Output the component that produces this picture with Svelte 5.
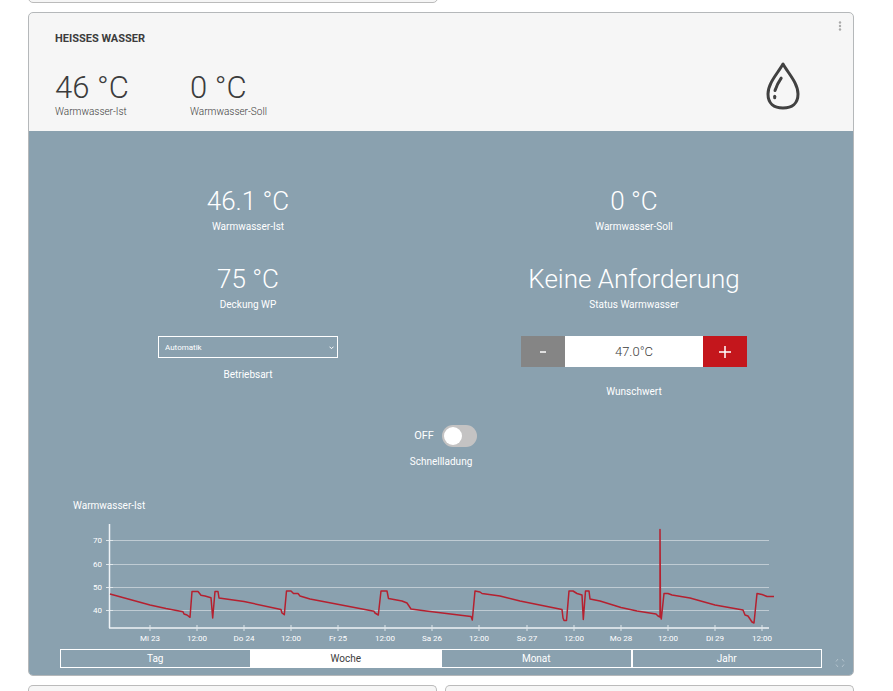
<script lang="ts">
	const ranges: string[] = ['Tag', 'Woche', 'Monat', 'Jahr'];
	const modes: string[] = ['Automatik', 'Aus', 'Handbetrieb'];

	let range: string = $state('Woche');
	let mode: string = $state('Automatik');
	let target: number = $state(47);
	let quickCharge: boolean = $state(false);

	const targetText = $derived(`${target.toFixed(1)}°C`);

	const yTicks = [
		{ label: '70', y: 24 },
		{ label: '60', y: 48 },
		{ label: '50', y: 71 },
		{ label: '40', y: 94 }
	];

	const days: string[] = ['Mi 23', 'Do 24', 'Fr 25', 'Sa 26', 'So 27', 'Mo 28', 'Di 29'];
	const xTicks = days.flatMap((day, i) => [
		{ label: day, x: Math.round(90 + i * 94.15) },
		{ label: '12:00', x: Math.round(137 + i * 94.15) }
	]);

	// one week of tank temperature, in chart units
	const series = [
		'50,78 70,83.5 90,89 106,92.5 123,95.7 124,98 127,99 130,101.3 132,75.5 138,75.5 141,79.3 145,80 151,81.7',
		'152.7,102 155,75.5 158,75.5 159,82 184,85.5 221,93.5 222,97 224.3,98.7 226.5,75 231,75 233.5,77.5 238,77.5',
		'240,80 250,83 271,87 314,95.3 315,97 318.3,99 321,75 327,75 328.5,82.5 342,85 347,87 351,93 366,95 411,100.5',
		'412.3,104 415,75 420,76 422,77.5 440,80 460,85 502,93.5 503,102 504,104.5 506.5,104.5 509,75 513,75 517,77.5',
		'522,79 523.3,103.5 525.5,75 529,75 530,83 540,85 561,91.5 577,95 596,98 598,100 600,101 600,13.5 600.5,100',
		'601.3,103 604,77.5 608,77.5 612,79 630,82 655,89 683,94 685,99 688,100 692,106 694,107 697,77.5 702,78.5',
		'707,80.5 714,80.5'
	].join(' ');
</script>

<svelte:head>
	<title>Heisses Wasser</title>
</svelte:head>

<main class="page">
	<div class="neighbours above">
		<div class="stub"></div>
		<div class="blank"></div>
	</div>

	<section class="card">
		<header class="head">
			<button class="menu" aria-label="Menü">
				<svg width="4" height="10" viewBox="0 0 4 10">
					<circle cx="2" cy="1.5" r="1.2" />
					<circle cx="2" cy="5" r="1.2" />
					<circle cx="2" cy="8.5" r="1.2" />
				</svg>
			</button>
			<div class="summary">
				<h1>HEISSES WASSER</h1>
				<div class="readings">
					<div class="reading">
						<div class="big">46 °C</div>
						<div class="caption">Warmwasser-Ist</div>
					</div>
					<div class="reading">
						<div class="big">0 °C</div>
						<div class="caption">Warmwasser-Soll</div>
					</div>
				</div>
			</div>
			<svg class="drop" width="34" height="50" viewBox="0 0 34 50" fill="none">
				<path d="M17 3C12 12 2 22 2 33c0 9.500 6 14 15 14s15-4.500 15-14C32 22 22 12 17 3Z" />
				<path d="M15.200 17.200C12.500 21 10.500 25 9 29.500" />
				<path d="M8.700 35.300v1.400" />
			</svg>
		</header>

		<div class="body">
			<div class="cells">
				<div class="cell">
					<div class="value">46.1 °C</div>
					<div class="label">Warmwasser-Ist</div>
				</div>
				<div class="cell">
					<div class="value">0 °C</div>
					<div class="label">Warmwasser-Soll</div>
				</div>
				<div class="cell">
					<div class="value">75 °C</div>
					<div class="label">Deckung WP</div>
				</div>
				<div class="cell">
					<div class="value">Keine Anforderung</div>
					<div class="label">Status Warmwasser</div>
				</div>
			</div>

			<div class="controls">
				<div class="control">
					<div class="select">
						<select id="mode" bind:value={mode}>
							{#each modes as m}
								<option>{m}</option>
							{/each}
						</select>
						<svg class="arrow" width="5" height="4" viewBox="0 0 5 4">
							<path d="M.5.700 2.500 2.700 4.500.7" />
						</svg>
					</div>
					<label class="label" for="mode">Betriebsart</label>
				</div>
				<div class="control wide">
					<div class="stepper">
						<button class="minus" aria-label="Verringern" onclick={() => target -= 0.5}>
							<svg width="12" height="12" viewBox="0 0 12 12"><path d="M3 6h6" /></svg>
						</button>
						<input id="target" value={targetText} readonly />
						<button class="plus" aria-label="Erhöhen" onclick={() => target += 0.5}>
							<svg width="12" height="12" viewBox="0 0 12 12"><path d="M0 6h12M6 0v12" /></svg>
						</button>
					</div>
					<label class="label" for="target">Wunschwert</label>
				</div>
			</div>

			<div class="quick">
				<div class="switch-row">
					<span class="state">{quickCharge ? 'ON' : 'OFF'}</span>
					<input id="quick" class="switch" type="checkbox" bind:checked={quickCharge} />
				</div>
				<label class="label" for="quick">Schnellladung</label>
			</div>

			<div class="history">
				<div class="label chart-title">Warmwasser-Ist</div>
				<svg class="chart" viewBox="0 0 762 130" role="img" aria-label="Warmwasser-Ist">
					{#each yTicks as t}
						<line class="grid" x1="50" x2="709" y1={t.y + 0.5} y2={t.y + 0.5} />
						<line class="tick" x1="46" x2="53" y1={t.y + 0.5} y2={t.y + 0.5} />
						<text class="y-label" x="42" y={t.y + 3}>{t.label}</text>
					{/each}
					<line class="axis" x1="49.5" x2="49.5" y1="8" y2="112" />
					<line class="axis" x1="49" x2="709" y1="112" y2="112" />
					{#each xTicks as t}
						<line class="tick" x1={t.x} x2={t.x} y1="109" y2="115" />
						<text class="x-label" x={t.x} y="125">{t.label}</text>
					{/each}
					<polyline class="series" points={series} />
				</svg>
				<div class="ranges">
					{#each ranges as r}
						<button class="range" class:active={range === r} onclick={() => range = r}>{r}</button>
					{/each}
				</div>
			</div>

			<button class="expand" aria-label="Vollbild">
				<svg width="10" height="10" viewBox="0 0 10 10">
					<path d="M3 1 1 3.500M7 1l2 2.500M3 9 1 6.500M7 9l2-2.500" />
				</svg>
			</button>
		</div>
	</section>

	<div class="neighbours below">
		<div class="stub"></div>
		<div class="stub"></div>
	</div>
</main>

<style>
	:global(body) {
		margin: 0;
		background: #fff;
	}

	.page {
		display: flex;
		flex-direction: column;
		gap: 9px;
		padding: 0 39px 0 28px;
		font-family: Roboto, 'Liberation Sans', sans-serif;
		color: #3c3c3c;
	}

	button, input, select {
		font-family: inherit;
		margin: 0;
		border-radius: 0;
	}

	button {
		padding: 0;
		border: none;
		cursor: pointer;
	}

	.neighbours {
		display: flex;
		gap: 8px;
	}

	.stub, .blank {
		flex: 1;
		box-sizing: border-box;
	}

	.stub {
		background: #f6f6f6;
		border: 1px solid #bbb;
	}

	.above {
		height: 3px;
		align-items: flex-end;
	}

	.above .stub {
		height: 20px;
		border-radius: 5px;
	}

	.below .stub {
		height: 6px;
		border-bottom: none;
		border-radius: 5px 5px 0 0;
	}

	.card {
		border: 1px solid #b5b8ba;
		border-radius: 5px;
		overflow: hidden;
		background: #f6f6f6;
	}

	.head {
		position: relative;
		display: flex;
		justify-content: space-between;
		align-items: flex-end;
		padding: 18px 53px 12px 26px;
	}

	.menu {
		position: absolute;
		top: 8px;
		right: 8px;
		width: 10px;
		height: 10px;
		display: flex;
		justify-content: center;
		background: none;
	}

	.menu svg {
		fill: #aaa;
	}

	h1 {
		margin: 0;
		font-size: 11px;
		line-height: 16px;
		font-weight: 700;
	}

	.readings {
		display: flex;
		margin-top: 24px;
	}

	.reading {
		width: 135px;
	}

	.big {
		font-size: 31px;
		line-height: 34px;
		font-weight: 300;
	}

	.caption {
		font-size: 10px;
		line-height: 14px;
		font-weight: 300;
	}

	.drop {
		margin-bottom: 8px;
		stroke: #414141;
		stroke-width: 3;
		stroke-linecap: round;
		stroke-linejoin: round;
	}

	.body {
		position: relative;
		padding: 54px 26px 7px;
		background: #8aa1af;
		color: #fff;
	}

	.cells {
		display: grid;
		grid-template-columns: 1fr 1fr;
		row-gap: 26px;
		text-align: center;
	}

	.value {
		font-size: 26px;
		line-height: 32px;
		font-weight: 300;
	}

	.label {
		font-size: 10px;
		line-height: 20px;
	}

	.controls {
		display: grid;
		grid-template-columns: 1fr 1fr;
		margin-top: 21px;
	}

	.control {
		display: flex;
		flex-direction: column;
		align-items: center;
		gap: 7px;
	}

	.control.wide {
		gap: 15px;
	}

	.select {
		position: relative;
		width: 180px;
	}

	select {
		display: block;
		width: 100%;
		height: 22px;
		padding: 0 6px;
		border: 1px solid #fff;
		background: transparent;
		color: #fff;
		font-size: 8px;
		appearance: none;
	}

	option {
		color: #3c3c3c;
	}

	.arrow {
		position: absolute;
		top: 10px;
		right: 4px;
		fill: none;
		stroke: #fff;
		pointer-events: none;
	}

	.stepper {
		display: flex;
		width: 226px;
		height: 31px;
	}

	.stepper button {
		width: 44px;
		display: flex;
		align-items: center;
		justify-content: center;
	}

	.stepper svg {
		stroke: #fff;
		stroke-width: 1.5;
	}

	.minus {
		background: #858585;
	}

	.plus {
		background: #c4161c;
	}

	.stepper input {
		flex: 1;
		min-width: 0;
		padding: 0;
		border: none;
		background: #fff;
		color: #3c3c3c;
		font-size: 13px;
		font-weight: 300;
		text-align: center;
	}

	.quick {
		display: flex;
		flex-direction: column;
		align-items: center;
		gap: 5px;
		margin-top: 23px;
	}

	.switch-row {
		display: flex;
		align-items: center;
		gap: 8px;
		padding-left: 9px;
	}

	.state {
		font-size: 11px;
		line-height: 22px;
	}

	.switch {
		appearance: none;
		width: 35px;
		height: 22px;
		padding: 2px;
		box-sizing: border-box;
		border-radius: 11px;
		background: #c4c3c3;
		cursor: pointer;
	}

	.switch::before {
		content: '';
		display: block;
		width: 18px;
		height: 18px;
		border-radius: 50%;
		background: #fff;
	}

	.switch:checked {
		background: #c4161c;
	}

	.switch:checked::before {
		margin-left: auto;
	}

	.history {
		margin: 24px 5px 0;
	}

	.chart-title {
		padding-left: 13px;
	}

	.chart {
		display: block;
		width: 100%;
		height: auto;
	}

	.grid {
		stroke: #bfcbd3;
	}

	.axis {
		stroke: #eef3f6;
		stroke-width: 1.5;
	}

	.tick {
		stroke: #dfe6ea;
	}

	.chart text {
		fill: #fff;
		font-size: 8px;
	}

	.y-label {
		text-anchor: end;
	}

	.x-label {
		text-anchor: middle;
	}

	.series {
		fill: none;
		stroke: #b5202f;
		stroke-width: 1.5;
		stroke-linejoin: round;
	}

	.ranges {
		display: flex;
		margin-top: 3px;
	}

	.range {
		flex: 1;
		height: 19px;
		border: 1px solid #fff;
		background: transparent;
		color: #fff;
		font-size: 10px;
		line-height: 17px;
	}

	.range.active {
		background: #fff;
		color: #3c3c3c;
	}

	.expand {
		position: absolute;
		right: 8px;
		bottom: 7px;
		width: 10px;
		height: 10px;
		background: none;
	}

	.expand svg {
		display: block;
		fill: none;
		stroke: #b3c2cc;
	}
</style>
